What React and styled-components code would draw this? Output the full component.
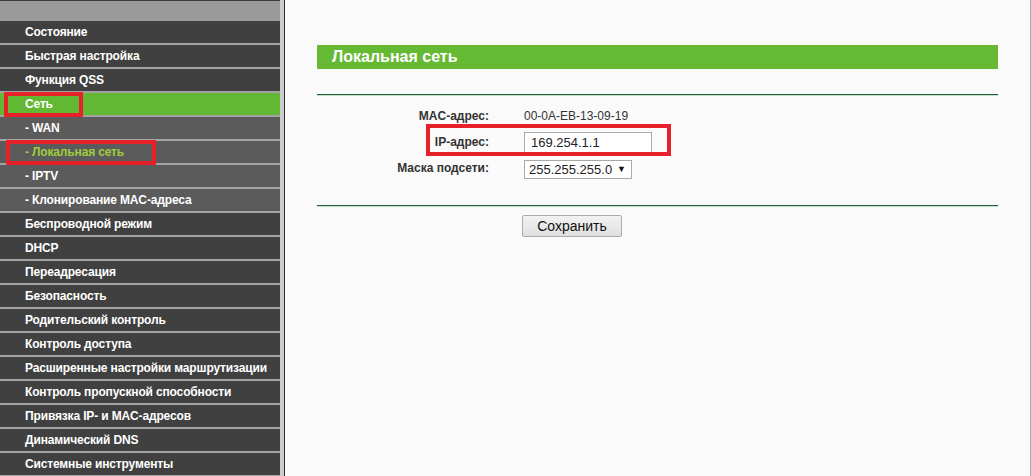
import React from 'react'
import styled, { createGlobalStyle } from 'styled-components'

const GlobalStyle = createGlobalStyle`
  html, body {
    margin: 0;
    padding: 0;
    height: 100%;
    overflow: hidden;
  }
  body {
    font-family: 'Liberation Sans', Arial, sans-serif;
    background: #fafafa;
  }
`

const Page = styled.div`
  display: flex;
  width: 1031px;
  height: 476px;
  overflow: hidden;
`

const Sidebar = styled.div`
  width: 280px;
  flex: none;
  display: flex;
  flex-direction: column;
  background: #a3a3a3;
  border-right: 4px solid #cbcbcb;
`

const SidebarTop = styled.div`
  height: 20px;
  border-top: 1px solid #3a3a3a;
  background: #9a9a9a;
  flex: none;
`

const MenuItem = styled.div`
  position: relative;
  height: 22px;
  margin-bottom: 2px;
  flex: none;
  display: flex;
  align-items: center;
  padding-left: 25px;
  font-size: 12px;
  font-weight: bold;
  letter-spacing: -0.15px;
  white-space: nowrap;
  color: ${(p) => (p.$current ? '#9fcd3d' : '#ffffff')};
  background: ${(p) => (p.$active ? '#63b833' : p.$sub ? '#5b5b5b' : '#404040')};
`

const Mark = styled.div`
  position: absolute;
  top: -1px;
  left: ${(p) => p.$left}px;
  width: ${(p) => p.$width}px;
  height: 25px;
  box-sizing: border-box;
  border: 4px solid #e8202a;
  pointer-events: none;
`

const Main = styled.div`
  flex: 1;
  background: #fafafa;
  border-left: 1px solid #2e2e2e;
  border-right: 1px solid #a8a8a8;
  padding: 45px 32px 0;
`

const Header = styled.div`
  height: 24px;
  background: #66b933;
  color: #ffffff;
  font-size: 16px;
  font-weight: bold;
  display: flex;
  align-items: center;
  padding-left: 15px;
`

const Rule = styled.div`
  border-top: 1px solid #235d3a;
  border-bottom: 1px solid #c4e0c6;
  margin-top: ${(p) => p.$top}px;
`

const Form = styled.div`
  position: relative;
  display: grid;
  grid-template-columns: 172px 1fr;
  grid-auto-rows: 26px;
  column-gap: 35px;
  margin-top: 7px;
  margin-bottom: 24px;
`

const Label = styled.div`
  display: flex;
  align-items: center;
  justify-content: flex-end;
  font-size: 12px;
  font-weight: bold;
  color: #333333;
`

const Value = styled.div`
  display: flex;
  align-items: center;
  font-size: 12px;
  color: #333333;
`

const TextInput = styled.div`
  width: 128px;
  height: 21px;
  box-sizing: border-box;
  border: 1px solid #a9a9a9;
  background: #ffffff;
  padding-left: 6px;
  display: flex;
  align-items: center;
  font-size: 13px;
  color: #222222;
`

const Select = styled.div`
  width: 108px;
  height: 19px;
  box-sizing: border-box;
  border: 1px solid #a9a9a9;
  background: #ffffff;
  padding: 0 5px 0 4px;
  display: flex;
  align-items: center;
  justify-content: space-between;
  font-size: 13px;
  color: #222222;
  margin-top: 2px;
`

const Arrow = styled.span`
  font-size: 9px;
  color: #111111;
`

const Highlight = styled.div`
  position: absolute;
  left: 109px;
  top: 21px;
  width: 245px;
  height: 32px;
  box-sizing: border-box;
  border: 4px solid #e8202a;
  pointer-events: none;
`

const Actions = styled.div`
  padding: 8px 0 0 205px;
`

const Button = styled.button`
  width: 100px;
  height: 22px;
  border: 1px solid #acacac;
  border-radius: 2px;
  background: linear-gradient(#f2f2f2, #e0e0e0);
  font-family: 'Liberation Sans', Arial, sans-serif;
  font-size: 14px;
  color: #111111;
  padding: 0;
`

const menu = [
  { label: 'Состояние' },
  { label: 'Быстрая настройка' },
  { label: 'Функция QSS' },
  { label: 'Сеть', active: true, mark: [4, 79] },
  { label: '- WAN', sub: true },
  { label: '- Локальная сеть', sub: true, current: true, mark: [6, 150] },
  { label: '- IPTV', sub: true },
  { label: '- Клонирование MAC-адреса', sub: true },
  { label: 'Беспроводной режим' },
  { label: 'DHCP' },
  { label: 'Переадресация' },
  { label: 'Безопасность' },
  { label: 'Родительский контроль' },
  { label: 'Контроль доступа' },
  { label: 'Расширенные настройки маршрутизации' },
  { label: 'Контроль пропускной способности' },
  { label: 'Привязка IP- и MAC-адресов' },
  { label: 'Динамический DNS' },
  { label: 'Системные инструменты' },
]

const App = () => {
  return (
    <Page>
      <GlobalStyle />
      <Sidebar>
        <SidebarTop />
        {menu.map((item) => (
          <MenuItem
            key={item.label}
            $sub={item.sub}
            $active={item.active}
            $current={item.current}
          >
            {item.label}
            {item.mark && <Mark $left={item.mark[0]} $width={item.mark[1]} />}
          </MenuItem>
        ))}
      </Sidebar>
      <Main>
        <Header>Локальная сеть</Header>
        <Rule $top={25} />
        <Form>
          <Label>MAC-адрес:</Label>
          <Value>00-0A-EB-13-09-19</Value>
          <Label>IP-адрес:</Label>
          <Value>
            <TextInput>169.254.1.1</TextInput>
          </Value>
          <Label>Маска подсети:</Label>
          <Value>
            <Select>
              <span>255.255.255.0</span>
              <Arrow>▼</Arrow>
            </Select>
          </Value>
          <Highlight />
        </Form>
        <Rule $top={0} />
        <Actions>
          <Button>Сохранить</Button>
        </Actions>
      </Main>
    </Page>
  )
}

export default App
